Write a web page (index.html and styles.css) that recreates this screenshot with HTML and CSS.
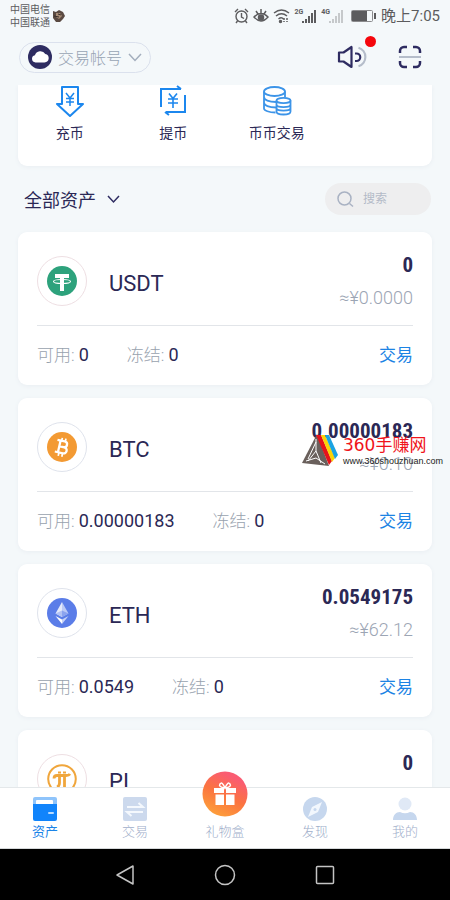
FILE: index.html
```html
<!DOCTYPE html>
<html lang="zh-CN">
<head>
<meta charset="utf-8">
<meta name="viewport" content="width=device-width, initial-scale=1">
<title>资产</title>
<link rel="stylesheet" href="styles.css">
</head>
<body>
<div class="status">
  <div class="carriers"><span>中国电信</span><span>中国联通</span></div>
  <svg class="avatar" width="14" height="14" viewBox="0 0 14 14"><path d="M1 2l3 1 3-2 4 2 2 4-2 3-3 3H4L1 9z" fill="#5a4a42"/><path d="M4 4l4 0 2 3-3 3-3-2z" fill="#a58a74"/><path d="M2 7l5 1M6 5l3 1" stroke="#3c302b"/></svg>
  <div class="status-icons">
    <svg width="15" height="16" viewBox="0 0 15 16" fill="none" stroke="#5c5c5e" stroke-width="1.4"><circle cx="7.500" cy="8.500" r="5.500"/><path d="M7.500 5v4l2.500 1.500M1 4l3-3M14 4l-3-3M3.500 13L2 15M11.500 13l1.500 2"/></svg>
    <svg width="16" height="16" viewBox="0 0 16 16" fill="none" stroke="#5c5c5e" stroke-width="1.500"><path d="M1 9q7-7 14 0-7 8-14 0zM8 1v4M3 3l2 3M13 3l-2 3"/><circle cx="8" cy="9.500" r="2.500" fill="#5c5c5e"/></svg>
    <svg width="17" height="16" viewBox="0 0 17 16" fill="none" stroke="#5c5c5e" stroke-width="1.500"><path d="M1 5q7.500-6 15 0M3 8q5.500-4.500 11 0M5.500 11q3-2.500 5 0"/><circle cx="7.500" cy="13.500" r="1" fill="#5c5c5e"/><path d="M11 10v4M14 10v4" stroke-dasharray="2 1"/></svg>
    <span class="net">2G</span>
    <svg width="15" height="16" viewBox="0 0 15 16" fill="#5c5c5e"><path d="M0 13h2v2H0zM3 11h2v4H3zM6 8h2v7H6zM9 5h2v10H9zM12 2h2v13h-2z"/></svg>
    <span class="net">4G</span>
    <svg width="15" height="16" viewBox="0 0 15 16" fill="#c6c9cb"><path d="M0 13h2v2H0zM3 11h2v4H3zM6 8h2v7H6zM9 5h2v10H9zM12 2h2v13h-2z"/></svg>
    <svg class="battery" width="26" height="14" viewBox="0 0 26 14"><rect x=".5" y="1.500" width="21" height="11" rx="1" fill="none" stroke="#8b8b8d"/><path d="M1 2h15v10H1zM23 4h2v6h-2z" fill="#5c5c5e"/></svg>
  </div>
  <time class="clock">晚上7:05</time>
</div>

<header class="top">
  <button class="account" type="button">
    <svg width="24" height="24" viewBox="0 0 24 24"><circle cx="12" cy="12" r="12" fill="#2e2c61"/><path d="M7.500 17.500a3.700 3.700 0 0 1-.6-7.300A5.700 5.700 0 0 1 17.300 9a4.300 4.300 0 0 1-.8 8.500z" fill="#fff"/></svg>
    <span>交易帐号</span>
    <svg width="14" height="9" viewBox="0 0 14 9" fill="none" stroke="#a3aebd" stroke-width="1.500"><path d="M1 1l6 6.500L13 1"/></svg>
  </button>
  <div class="tools">
    <button class="tool" type="button" aria-label="公告">
      <svg width="30" height="24" viewBox="0 0 30 24" fill="none" stroke-width="2.200" stroke-linejoin="round"><path d="M2 7.500h4.500L14.500 2v20l-8-5.500H2z" stroke="#2e2c61"/><path d="M18 8.500h1.500a3.700 3.700 0 0 1 0 7.500H18" stroke="#2e2c61"/><path d="M21.500 2.800a9.600 9.600 0 0 1 0 18.400" stroke="#b5bdca"/></svg>
      <i class="dot"></i>
    </button>
    <button class="tool" type="button" aria-label="扫一扫">
      <svg width="24" height="24" viewBox="0 0 24 24" fill="none" stroke="#2e2c61" stroke-width="2.500"><path d="M2 8V6a4 4 0 0 1 4-4h3M15 2h3a4 4 0 0 1 4 4v2M22 16v2a4 4 0 0 1-4 4h-3M9 22H6a4 4 0 0 1-4-4v-2"/><path d="M1 12h22" stroke="#b5bdca" stroke-width="2"/></svg>
    </button>
  </div>
</header>

<main class="content">
  <nav class="actions">
    <a href="#deposit"><svg width="30" height="32" viewBox="0 0 30 32" fill="none" stroke="#1c87ee" stroke-width="2" stroke-linejoin="round"><path d="M7 2h16v17h5L15 31 2 19h5z"/><path d="M11 8l4 5 4-5M15 13v8M11 13.500h8M11 17h8" stroke-width="1.500"/></svg>充币</a>
    <a href="#withdraw"><svg width="30" height="32" viewBox="0 0 30 32" fill="none" stroke="#1c87ee" stroke-width="2"><path d="M3 22V4h20M19 1l4 3M27 10v17H8M11 30l-4-3"/><path d="M11 8.500l4 5 4-5M15 13.500V23M10 14h10M10 18h10" stroke-width="1.600"/></svg>提币</a>
    <a href="#swap"><svg width="30" height="32" viewBox="0 0 30 32" fill="none" stroke="#3c94e8" stroke-width="1.800"><ellipse cx="12.500" cy="6.500" rx="10.500" ry="4.500"/><path d="M2 6.500v17c0 2 5 4 11.500 4M23 6.500v6M2 12c0 3 5 5 12 5M2 17.500c0 3 5 5 12 5"/><ellipse cx="21.500" cy="15.500" rx="7" ry="2.700"/><path d="M14.500 15.500v11c0 4 14 4 14 0v-11M14.500 19.500c0 3.500 14 3.500 14 0M14.500 23c0 3.500 14 3.500 14 0"/></svg>币币交易</a>
  </nav>

  <div class="filter">
    <button class="all" type="button">全部资产
      <svg width="13" height="9" viewBox="0 0 13 9" fill="none" stroke="#2e2c61" stroke-width="1.500"><path d="M1 1l5.500 6L12 1"/></svg>
    </button>
    <label class="search">
      <svg width="17" height="17" viewBox="0 0 17 17" fill="none" stroke="#a9b2c3" stroke-width="1.500"><circle cx="7.500" cy="7.500" r="6.500"/><path d="M12.500 12.500l3.500 3"/></svg>
      <input type="search" placeholder="搜索" aria-label="搜索">
    </label>
  </div>

  <section class="coin">
    <div class="summary">
      <span class="logo pink"><svg width="30" height="30" viewBox="0 0 30 30"><circle cx="15" cy="15" r="15" fill="#2da27c"/><path d="M8 8h14v4h-5v13h-4V12H8z" fill="#fff"/><ellipse cx="15" cy="15.500" rx="8.500" ry="2" fill="none" stroke="#fff" stroke-width="1.100"/></svg></span>
      <h2>USDT</h2>
      <div class="worth"><strong>0</strong><span>≈¥0.0000</span></div>
    </div>
    <div class="detail"><span>可用: <b>0</b></span><span>冻结: <b>0</b></span><a href="#usdt">交易</a></div>
  </section>

  <section class="coin">
    <div class="summary">
      <span class="logo"><svg width="30" height="30" viewBox="0 0 30 30"><circle cx="15" cy="15" r="15" fill="#f39a33"/><g transform="rotate(13 15 15)" fill="none" stroke="#fff" stroke-width="2.300"><path d="M9 9h7.500a2.900 2.900 0 0 1 0 5.800H12M12 14.800h5.300a3.100 3.100 0 0 1 0 6.200H9M12.200 9v12"/><path d="M13.300 6v3M17 6v3M13.300 21v3.500M17 21v3.500" stroke-width="1.700"/></g></svg></span>
      <h2>BTC</h2>
      <div class="worth"><strong>0.00000183</strong><span>≈¥0.10</span></div>
    </div>
    <div class="detail"><span>可用: <b>0.00000183</b></span><span>冻结: <b>0</b></span><a href="#btc">交易</a></div>
    <div class="mark">
      <svg width="37" height="32" viewBox="0 0 37 32"><path d="M15 0L0 29l27 3z" fill="#6a605c"/><path d="M14 8L6 25M14 17l-8 10M14 17l5 12M14 17V5M4 27l10-3 9 6" stroke="#fff" stroke-width="1" fill="none"/><path d="M14 1h5l11 26-3 4z" fill="#e5131b"/><path d="M19 1h4l10 23-3 4z" fill="#fcd307"/><path d="M23 1h4l9 20-3 4z" fill="#1ba3e2"/></svg>
      <div class="mark-text"><span>360手赚网</span><small>www.360shouzhuan.com</small></div>
    </div>
  </section>

  <section class="coin">
    <div class="summary">
      <span class="logo"><svg width="30" height="30" viewBox="0 0 30 30"><circle cx="15" cy="15" r="15" fill="#5b7de8"/><path d="M15 4L8.500 15.500 15 19z" fill="#e4eafc"/><path d="M15 4l6.500 11.500L15 19z" fill="#bccaf6"/><path d="M15 12.500l-6.500 3L15 19z" fill="#b2c2f4"/><path d="M15 12.500l6.500 3L15 19z" fill="#8ba3ef"/><path d="M8.500 18l6.500 3.500V26z" fill="#fff"/><path d="M21.500 18L15 21.500V26z" fill="#c6d2f8"/></svg></span>
      <h2>ETH</h2>
      <div class="worth"><strong>0.0549175</strong><span>≈¥62.12</span></div>
    </div>
    <div class="detail"><span>可用: <b>0.0549</b></span><span>冻结: <b>0</b></span><a href="#eth">交易</a></div>
  </section>

  <section class="coin">
    <div class="summary">
      <span class="logo pink"><svg width="30" height="30" viewBox="0 0 30 30" fill="none" stroke="#f0a63c"><circle cx="15" cy="15" r="13.800" stroke-width="2"/><path d="M7 14.500q0-3 3-3h9q3 0 4-1.500M12.500 12v7q0 3-2.500 4M17.500 12v12" stroke-width="2.800"/><path d="M11 8.500h3M16 8.500h3" stroke-width="2"/></svg></span>
      <h2>PI</h2>
      <div class="worth"><strong>0</strong></div>
    </div>
  </section>
</main>

<nav class="tabs">
  <a class="on" href="#assets"><svg width="24" height="24" viewBox="0 0 24 24"><rect width="24" height="16" rx="2" fill="#8fc4fb"/><path d="M3 4a1 1 0 0 1 1-1h15a1 1 0 0 1 1 1v5H3z" fill="#fff"/><path d="M0 7h24v15a2 2 0 0 1-2 2H2a2 2 0 0 1-2-2z" fill="#1184fb"/><rect x="15" y="15" width="6" height="2" rx="1" fill="#b9dbff"/></svg>资产</a>
  <a href="#trade"><svg width="24" height="24" viewBox="0 0 24 24"><rect width="24" height="24" rx="2" fill="#ccd9ed"/><path d="M4 10h16l-4.500-4M20 15H4l4.500 4" stroke="#f4f8fd" stroke-width="2" fill="none"/></svg>交易</a>
  <a href="#gift"><svg class="gift" width="46" height="46" viewBox="0 0 46 46"><defs><linearGradient id="g" x1=".8" y1="0" x2=".3" y2="1"><stop offset=".15" stop-color="#fa5c72"/><stop offset=".55" stop-color="#fb7440"/><stop offset="1" stop-color="#fda03a"/></linearGradient></defs><circle cx="23" cy="23" r="22.500" fill="url(#g)"/><path d="M12 17h10v5H12zM24 17h10v5H24zM13.500 23.500H22V34h-8.500zM24 23.500h8.500V34H24z" fill="#fff"/><path d="M23 17q-7-1-5-4t5 4q3-7 5-4t-5 4" fill="none" stroke="#fff" stroke-width="1.500"/></svg>礼物盒</a>
  <a href="#discover"><svg width="24" height="24" viewBox="0 0 24 24"><circle cx="12" cy="12" r="12" fill="#c6d7ee"/><path d="M19 5l-4 10-10 5 4-10z" fill="#f2f7fd"/><circle cx="12" cy="12.500" r="1.500" fill="#c6d7ee"/></svg>发现</a>
  <a href="#me"><svg width="24" height="24" viewBox="0 0 24 24"><circle cx="12" cy="7" r="6.500" fill="#e0e9f6"/><path d="M0 23c0-5 3-8 7-8q5 2.500 10 0c4 0 7 3 7 8z" fill="#c6d7ee"/></svg>我的</a>
</nav>

<footer class="system">
  <button type="button" aria-label="返回"><svg width="22" height="22" viewBox="0 0 22 22"><path d="M19 2v18L3 11z"/></svg></button>
  <button type="button" aria-label="主屏幕"><svg width="22" height="22" viewBox="0 0 22 22"><circle cx="11" cy="11" r="9.500"/></svg></button>
  <button type="button" aria-label="最近任务"><svg width="22" height="22" viewBox="0 0 22 22"><rect x="2.500" y="2.500" width="17" height="17" rx="1"/></svg></button>
</footer>
</body>
</html>
```
FILE: styles.css
```css
* { box-sizing: border-box; }

body {
  margin: 0;
  height: 100vh;
  display: flex;
  flex-direction: column;
  overflow: hidden;
  background: #f4f8fa;
  color: #2b2855;
  font-family: Roboto, "Noto Sans CJK SC", sans-serif;
}

svg { display: block; flex: none; }
a { color: inherit; text-decoration: none; }
button { padding: 0; border: 0; background: none; color: inherit; font: inherit; }

.status {
  flex: none;
  height: 32px;
  padding: 0 10px;
  display: flex;
  align-items: center;
  color: #5c5c5e;
}
.carriers { display: flex; flex-direction: column; font-size: 10px; line-height: 13px; }
.avatar { margin-left: 2px; }
.status-icons { margin-left: auto; display: flex; align-items: center; gap: 4px; }
.net { align-self: flex-start; margin-right: -5px; font-size: 7px; font-weight: 700; line-height: 8px; }
.battery { margin-left: 3px; }
.clock { margin-left: 4px; font-size: 15px; line-height: 20px; }

.top {
  flex: none;
  height: 53px;
  padding: 10px 28px 13px 19px;
  display: flex;
  align-items: center;
  justify-content: space-between;
}
.account {
  height: 31px;
  padding: 0 8px;
  display: flex;
  align-items: center;
  gap: 6px;
  border: 1px solid #dbe1ed;
  border-radius: 16px;
  color: #98a4b4;
  font-size: 16px;
  font-weight: 300;
}
.tools { display: flex; gap: 31px; }
.tool { position: relative; }
.dot {
  position: absolute;
  top: -9px;
  right: -9px;
  width: 11px;
  height: 11px;
  border-radius: 50%;
  background: #f5060c;
}

.content { flex: 1; min-height: 0; padding: 0 18px; overflow: hidden; }

.actions {
  height: 81px;
  display: grid;
  grid-template-columns: repeat(4, 1fr);
  background: #fff;
  border-radius: 0 0 9px 9px;
  box-shadow: 0 1px 4px #e9eef2;
}
.actions a {
  display: flex;
  flex-direction: column;
  align-items: center;
  gap: 6px;
  font-size: 14px;
  line-height: 20px;
}

.filter { height: 66px; padding: 0 1px 0 6px; display: flex; align-items: center; justify-content: space-between; }
.all { display: flex; align-items: center; gap: 11px; font-size: 18px; }
.search {
  width: 106px;
  height: 32px;
  padding: 0 12px;
  display: flex;
  align-items: center;
  gap: 9px;
  border-radius: 16px;
  background: #eeeeef;
}
.search input { min-width: 0; flex: 1; padding: 0; border: 0; outline: 0; background: none; font: 12px Roboto, "Noto Sans CJK SC", sans-serif; }
.search input::placeholder { color: #b3bac7; }

.coin {
  position: relative;
  margin-bottom: 13px;
  padding: 0 19px;
  background: #fff;
  border-radius: 9px;
  box-shadow: 0 1px 4px #e9eef2;
}
.summary { height: 94px; padding-top: 5px; display: flex; align-items: center; border-bottom: 1px solid #e2e5e9; }
.logo {
  width: 50px;
  height: 50px;
  display: grid;
  place-items: center;
  border: 1px solid #dfe3ec;
  border-radius: 50%;
}
.logo.pink { border-color: #eedfe3; }
.coin h2 { margin: 5px 0 0 22px; font-size: 22px; font-weight: 400; line-height: 28px; }
.worth { height: 60px; margin-left: auto; display: flex; flex-direction: column; align-items: flex-end; gap: 6px; }
.worth strong { font-family: "Roboto Condensed", Roboto, sans-serif; font-size: 21px; font-weight: 700; line-height: 28px; }
.worth span { color: #9ca5b4; font-size: 18px; font-weight: 300; line-height: 26px; }
.detail { height: 59px; padding-bottom: 4px; display: flex; align-items: center; gap: 38px; font-size: 17px; }
.detail span { color: #98a2ae; font-weight: 300; }
.detail b { color: #2b2855; font-size: 18px; font-weight: 400; }
.detail a { margin-left: auto; color: #1c83e4; }

.mark { position: absolute; top: 35px; right: -11px; display: flex; align-items: center; gap: 4px; }
.mark-text { display: flex; flex-direction: column; }
.mark-text span { color: #f0141b; font: 17px/24px "DejaVu Sans", "Noto Sans CJK SC", sans-serif; }
.mark-text small { color: #222; font: 9px/9px "Liberation Sans", sans-serif; }

.tabs {
  position: relative;
  flex: none;
  height: 62px;
  padding-top: 9px;
  display: grid;
  grid-template-columns: repeat(5, 1fr);
  background: #fff;
  border-top: 1px solid #e4e8ea;
  border-bottom: 1px solid #d5d8da;
}
.tabs a {
  display: flex;
  flex-direction: column;
  align-items: center;
  gap: 2px;
  color: #a0aeca;
  font-size: 13px;
  font-weight: 300;
  line-height: 18px;
}
.tabs .on { color: #1b84e8; font-weight: 400; }
.tabs .gift { margin: -26px 0 4px; }

.system { flex: none; height: 51px; display: flex; align-items: center; justify-content: center; gap: 78px; background: #000; }
.system svg { fill: none; stroke: #c4c4c4; stroke-width: 1.5; stroke-linejoin: round; }
```
